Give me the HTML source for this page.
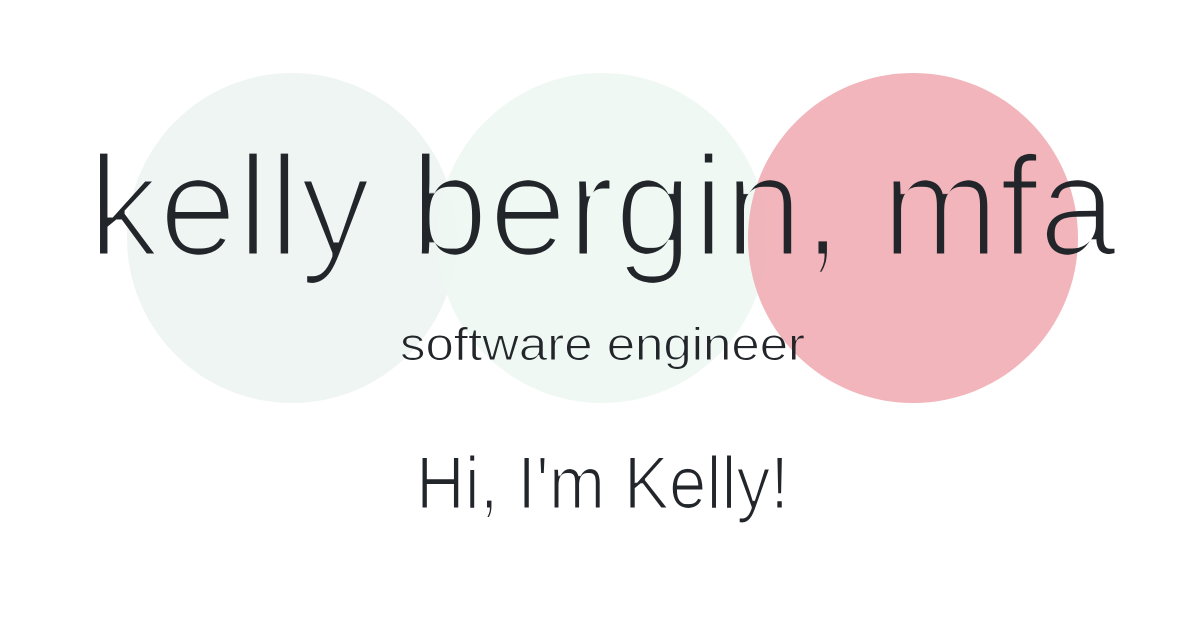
<!DOCTYPE html>
<html><head><meta charset="utf-8"><style>
html,body{margin:0;padding:0;background:#fff;width:1200px;height:627px;overflow:hidden}
</style></head><body>
<svg width="1200" height="627" viewBox="0 0 1200 627" xmlns="http://www.w3.org/2000/svg">
<defs>
<filter id="e4" x="-5%" y="-20%" width="110%" height="140%"><feMorphology operator="erode" radius="2.5 1.5"/></filter>
<filter id="e2" x="-5%" y="-20%" width="110%" height="140%"><feMorphology operator="erode" radius="1 0.6"/></filter>
<filter id="e1" x="-5%" y="-20%" width="110%" height="140%"><feMorphology operator="erode" radius="0.7 0.4"/></filter>
</defs>
<circle cx="292" cy="238" r="165" fill="#eef4f1" fill-opacity="0.95"/>
<circle cx="602" cy="238" r="165" fill="#edf7f2" fill-opacity="0.85"/>
<circle cx="913" cy="238" r="165" fill="#efabb2" fill-opacity="0.88"/>
<g font-family="'Liberation Sans', sans-serif" fill="#212529">
<text x="88" y="255" font-size="142" textLength="1029" lengthAdjust="spacingAndGlyphs" filter="url(#e4)">kelly bergin, mfa</text>
<text x="400" y="360" font-size="46" textLength="405" lengthAdjust="spacingAndGlyphs" filter="url(#e1)">software engineer</text>
<text x="416" y="508" font-size="73" textLength="373" lengthAdjust="spacingAndGlyphs" filter="url(#e2)">Hi, I'm Kelly!</text>
</g>
</svg>
</body></html>
